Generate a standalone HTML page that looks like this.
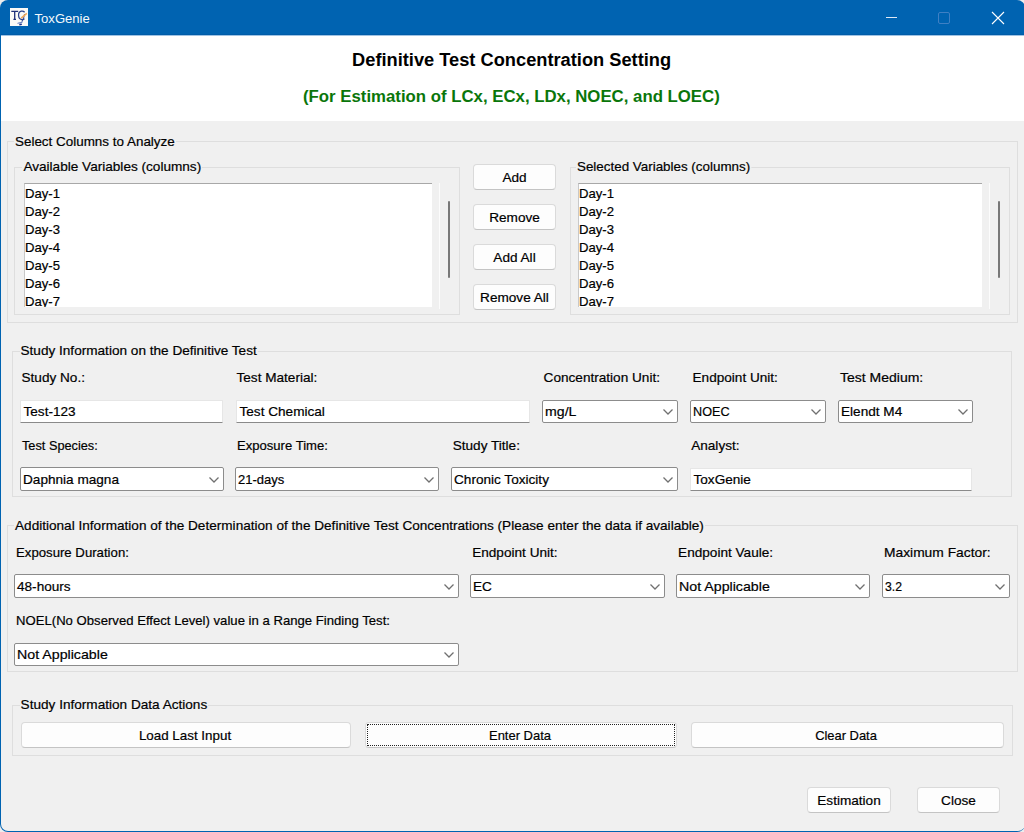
<!DOCTYPE html>
<html><head><meta charset="utf-8"><title>ToxGenie</title>
<style>
html,body{margin:0;padding:0;}
body{width:1024px;height:832px;position:relative;overflow:hidden;background:#ededed;font-family:"Liberation Sans",sans-serif;}
.t{position:absolute;white-space:nowrap;-webkit-text-stroke:0.2px currentColor;}
</style></head><body>

<div style="position:absolute;left:0px;top:0px;width:1025px;height:832px;box-sizing:border-box;background:#0063b1;border-radius:8px;"></div>
<div style="position:absolute;left:1px;top:35px;width:1024px;height:796px;box-sizing:border-box;background:#f0f0f0;border-radius:0 0 7px 7px;"></div>
<div style="position:absolute;left:0px;top:34px;width:1024px;height:1px;box-sizing:border-box;background:#005ca8;"></div>
<div style="position:absolute;left:1px;top:35px;width:1023px;height:1px;box-sizing:border-box;background:#9fc3e4;"></div>
<div style="position:absolute;left:1px;top:36px;width:1023px;height:85px;box-sizing:border-box;background:#fff;"></div>
<svg width="18" height="18" viewBox="0 0 18 18" style="position:absolute;left:10px;top:8px">
<rect x="0" y="0" width="18" height="18" fill="#fbfaf7"/>
<path d="M1.3 3.3 H8.2 M4.7 3.3 V11.4 M3.4 11.4 H6" stroke="#1e2f78" stroke-width="1.3" fill="none"/>
<path d="M14.6 4.2 C13.6 3.1 12.3 2.9 11.2 3.2 C9.2 3.8 8.4 5.8 8.6 7.8 C8.8 10 10.3 11.6 12.3 11.6 C13.2 11.6 13.9 11.3 14.4 10.6" stroke="#2a3f8a" stroke-width="1.3" fill="none"/>
<path d="M14.6 6 C14.2 8.5 13.5 11.5 11.8 13.6" stroke="#3a4f9a" stroke-width="1.1" fill="none"/>
<path d="M11.2 10.2 L16.8 5.4" stroke="#f2a95a" stroke-width="1.6" fill="none"/>
<path d="M7.5 15.3 L12.5 14.2" stroke="#4a6ab8" stroke-width="0.9" fill="none"/>
<path d="M9.3 16.6 L11.8 16.2" stroke="#1a2f8a" stroke-width="1.6" fill="none"/>
</svg>
<div class="t" style="left:34.50px;top:11.06px;font-size:13.1px;line-height:16px;font-weight:normal;color:#f4f8fc;-webkit-text-stroke:0;">ToxGenie</div>
<div style="position:absolute;left:886px;top:17px;width:11px;height:1px;background:#dfe9f5"></div>
<div style="position:absolute;left:938px;top:12px;width:12px;height:12px;box-sizing:border-box;border:1px solid #3f80c4;border-radius:2px"></div>
<svg width="14" height="14" viewBox="0 0 14 14" style="position:absolute;left:991px;top:11px"><path d="M1 1 L13 13 M13 1 L1 13" stroke="#fff" stroke-width="1.1"/></svg>
<div class="t" style="left:211.60px;width:600px;text-align:center;top:48.18px;font-size:18.25px;line-height:23px;font-weight:bold;color:#000;-webkit-text-stroke:0">Definitive Test Concentration Setting</div>
<div class="t" style="left:211.40px;width:600px;text-align:center;top:86.08px;font-size:16.8px;line-height:21px;font-weight:bold;color:#0a760a;-webkit-text-stroke:0">(For Estimation of LCx, ECx, LDx, NOEC, and LOEC)</div>
<div style="position:absolute;left:7px;top:141px;width:1011px;height:182px;box-sizing:border-box;border:1px solid #dedede;"></div>
<div class="t" style="left:13.50px;top:132.59px;font-size:13.6px;line-height:17px;font-weight:normal;color:#000;background:#f0f0f0;padding:0 1px;transform:scaleX(0.988);transform-origin:0 0;">Select Columns to Analyze</div>
<div style="position:absolute;left:14px;top:167px;width:446px;height:148px;box-sizing:border-box;border:1px solid #dedede;"></div>
<div class="t" style="left:22.40px;top:157.79px;font-size:13.6px;line-height:17px;font-weight:normal;color:#000;background:#f0f0f0;padding:0 1px;">Available Variables (columns)</div>
<div style="position:absolute;left:570px;top:167px;width:440px;height:148px;box-sizing:border-box;border:1px solid #dedede;"></div>
<div class="t" style="left:576.40px;top:157.79px;font-size:13.6px;line-height:17px;font-weight:normal;color:#000;background:#f0f0f0;padding:0 1px;transform:scaleX(0.985);transform-origin:0 0;">Selected Variables (columns)</div>
<div style="position:absolute;left:24px;top:183px;width:408px;height:124px;box-sizing:border-box;background:#fff;border-left:1px solid #c8c8c8;border-top:1px solid #a8a8a8;"></div>
<div style="position:absolute;left:25px;top:184px;width:407px;height:123px;overflow:hidden">
<div class="t" style="left:0.3px;top:0.79px;font-size:13.6px;line-height:17px;transform:scaleX(0.965);transform-origin:0 0">Day-1</div>
<div class="t" style="left:0.3px;top:18.79px;font-size:13.6px;line-height:17px;transform:scaleX(0.965);transform-origin:0 0">Day-2</div>
<div class="t" style="left:0.3px;top:36.79px;font-size:13.6px;line-height:17px;transform:scaleX(0.965);transform-origin:0 0">Day-3</div>
<div class="t" style="left:0.3px;top:54.79px;font-size:13.6px;line-height:17px;transform:scaleX(0.965);transform-origin:0 0">Day-4</div>
<div class="t" style="left:0.3px;top:72.79px;font-size:13.6px;line-height:17px;transform:scaleX(0.965);transform-origin:0 0">Day-5</div>
<div class="t" style="left:0.3px;top:90.79px;font-size:13.6px;line-height:17px;transform:scaleX(0.965);transform-origin:0 0">Day-6</div>
<div class="t" style="left:0.3px;top:108.79px;font-size:13.6px;line-height:17px;transform:scaleX(0.965);transform-origin:0 0">Day-7</div>
</div>
<div style="position:absolute;left:439px;top:183px;width:1px;height:126px;box-sizing:border-box;background:#fcfcfc;"></div>
<div style="position:absolute;left:448px;top:201px;width:2px;height:77px;box-sizing:border-box;background:#787878;border-radius:1px;"></div>
<div style="position:absolute;left:578px;top:183px;width:404px;height:124px;box-sizing:border-box;background:#fff;border-left:1px solid #c8c8c8;border-top:1px solid #a8a8a8;"></div>
<div style="position:absolute;left:579px;top:184px;width:403px;height:123px;overflow:hidden">
<div class="t" style="left:0.3px;top:0.79px;font-size:13.6px;line-height:17px;transform:scaleX(0.965);transform-origin:0 0">Day-1</div>
<div class="t" style="left:0.3px;top:18.79px;font-size:13.6px;line-height:17px;transform:scaleX(0.965);transform-origin:0 0">Day-2</div>
<div class="t" style="left:0.3px;top:36.79px;font-size:13.6px;line-height:17px;transform:scaleX(0.965);transform-origin:0 0">Day-3</div>
<div class="t" style="left:0.3px;top:54.79px;font-size:13.6px;line-height:17px;transform:scaleX(0.965);transform-origin:0 0">Day-4</div>
<div class="t" style="left:0.3px;top:72.79px;font-size:13.6px;line-height:17px;transform:scaleX(0.965);transform-origin:0 0">Day-5</div>
<div class="t" style="left:0.3px;top:90.79px;font-size:13.6px;line-height:17px;transform:scaleX(0.965);transform-origin:0 0">Day-6</div>
<div class="t" style="left:0.3px;top:108.79px;font-size:13.6px;line-height:17px;transform:scaleX(0.965);transform-origin:0 0">Day-7</div>
</div>
<div style="position:absolute;left:989px;top:183px;width:1px;height:126px;box-sizing:border-box;background:#fcfcfc;"></div>
<div style="position:absolute;left:998px;top:201px;width:2px;height:77px;box-sizing:border-box;background:#787878;border-radius:1px;"></div>
<div style="position:absolute;left:473px;top:164px;width:83px;height:26px;box-sizing:border-box;background:#fdfdfd;border:1px solid #dadada;border-bottom-color:#c4c4c4;border-radius:4px;"></div>
<div class="t" style="left:214.50px;width:600px;text-align:center;top:168.99px;font-size:13.6px;line-height:17px;font-weight:normal;color:#000;">Add</div>
<div style="position:absolute;left:473px;top:204px;width:83px;height:26px;box-sizing:border-box;background:#fdfdfd;border:1px solid #dadada;border-bottom-color:#c4c4c4;border-radius:4px;"></div>
<div class="t" style="left:214.50px;width:600px;text-align:center;top:208.99px;font-size:13.6px;line-height:17px;font-weight:normal;color:#000;">Remove</div>
<div style="position:absolute;left:473px;top:244px;width:83px;height:26px;box-sizing:border-box;background:#fdfdfd;border:1px solid #dadada;border-bottom-color:#c4c4c4;border-radius:4px;"></div>
<div class="t" style="left:214.50px;width:600px;text-align:center;top:248.99px;font-size:13.6px;line-height:17px;font-weight:normal;color:#000;">Add All</div>
<div style="position:absolute;left:473px;top:284px;width:83px;height:26px;box-sizing:border-box;background:#fdfdfd;border:1px solid #dadada;border-bottom-color:#c4c4c4;border-radius:4px;"></div>
<div class="t" style="left:214.50px;width:600px;text-align:center;top:288.99px;font-size:13.6px;line-height:17px;font-weight:normal;color:#000;">Remove All</div>
<div style="position:absolute;left:12px;top:351px;width:1000px;height:146px;box-sizing:border-box;border:1px solid #dedede;"></div>
<div class="t" style="left:19.50px;top:341.79px;font-size:13.6px;line-height:17px;font-weight:normal;color:#000;background:#f0f0f0;padding:0 1px;">Study Information on the Definitive Test</div>
<div class="t" style="left:21.50px;top:368.79px;font-size:13.6px;line-height:17px;font-weight:normal;color:#000;">Study No.:</div>
<div class="t" style="left:236.50px;top:368.79px;font-size:13.6px;line-height:17px;font-weight:normal;color:#000;">Test Material:</div>
<div class="t" style="left:543.60px;top:368.79px;font-size:13.6px;line-height:17px;font-weight:normal;color:#000;">Concentration Unit:</div>
<div class="t" style="left:692.50px;top:368.79px;font-size:13.6px;line-height:17px;font-weight:normal;color:#000;">Endpoint Unit:</div>
<div class="t" style="left:840.00px;top:368.79px;font-size:13.6px;line-height:17px;font-weight:normal;color:#000;transform:scaleX(1.03);transform-origin:0 0;">Test Medium:</div>
<div style="position:absolute;left:20px;top:400px;width:203px;height:23px;box-sizing:border-box;background:#fff;border:1px solid #e6e6e6;border-bottom:1px solid #8a8a8a;border-radius:1px;"></div>
<div class="t" style="left:23.50px;top:403.29px;font-size:13.6px;line-height:17px;font-weight:normal;color:#000;">Test-123</div>
<div style="position:absolute;left:236px;top:400px;width:294px;height:23px;box-sizing:border-box;background:#fff;border:1px solid #e6e6e6;border-bottom:1px solid #8a8a8a;border-radius:1px;"></div>
<div class="t" style="left:239.50px;top:403.29px;font-size:13.6px;line-height:17px;font-weight:normal;color:#000;">Test Chemical</div>
<div style="position:absolute;left:542px;top:400px;width:136px;height:23px;box-sizing:border-box;background:#fff;border:1px solid #8c8c8c;border-radius:2px;"></div>
<div class="t" style="left:545.00px;top:402.79px;font-size:13.6px;line-height:17px;font-weight:normal;color:#000;transform:scaleX(1.04);transform-origin:0 0;">mg/L</div>
<svg width="10" height="6" viewBox="0 0 10 6" style="position:absolute;left:663px;top:409.0px"><path d="M0.5 0.5 L5 5 L9.5 0.5" fill="none" stroke="#707070" stroke-width="1.25"/></svg>
<div style="position:absolute;left:690px;top:400px;width:136px;height:23px;box-sizing:border-box;background:#fff;border:1px solid #8c8c8c;border-radius:2px;"></div>
<div class="t" style="left:693.00px;top:402.79px;font-size:13.6px;line-height:17px;font-weight:normal;color:#000;transform:scaleX(0.93);transform-origin:0 0;">NOEC</div>
<svg width="10" height="6" viewBox="0 0 10 6" style="position:absolute;left:811px;top:409.0px"><path d="M0.5 0.5 L5 5 L9.5 0.5" fill="none" stroke="#707070" stroke-width="1.25"/></svg>
<div style="position:absolute;left:838px;top:400px;width:135px;height:23px;box-sizing:border-box;background:#fff;border:1px solid #8c8c8c;border-radius:2px;"></div>
<div class="t" style="left:841.00px;top:402.79px;font-size:13.6px;line-height:17px;font-weight:normal;color:#000;">Elendt M4</div>
<svg width="10" height="6" viewBox="0 0 10 6" style="position:absolute;left:958px;top:409.0px"><path d="M0.5 0.5 L5 5 L9.5 0.5" fill="none" stroke="#707070" stroke-width="1.25"/></svg>
<div class="t" style="left:22.10px;top:437.09px;font-size:13.6px;line-height:17px;font-weight:normal;color:#000;transform:scaleX(0.937);transform-origin:0 0;">Test Species:</div>
<div class="t" style="left:237.10px;top:437.09px;font-size:13.6px;line-height:17px;font-weight:normal;color:#000;transform:scaleX(0.962);transform-origin:0 0;">Exposure Time:</div>
<div class="t" style="left:452.70px;top:437.09px;font-size:13.6px;line-height:17px;font-weight:normal;color:#000;">Study Title:</div>
<div class="t" style="left:691.20px;top:437.09px;font-size:13.6px;line-height:17px;font-weight:normal;color:#000;">Analyst:</div>
<div style="position:absolute;left:20px;top:467px;width:204px;height:24px;box-sizing:border-box;background:#fff;border:1px solid #8c8c8c;border-radius:2px;"></div>
<div class="t" style="left:23.00px;top:470.79px;font-size:13.6px;line-height:17px;font-weight:normal;color:#000;">Daphnia magna</div>
<svg width="10" height="6" viewBox="0 0 10 6" style="position:absolute;left:209px;top:476.5px"><path d="M0.5 0.5 L5 5 L9.5 0.5" fill="none" stroke="#707070" stroke-width="1.25"/></svg>
<div style="position:absolute;left:235px;top:467px;width:204px;height:24px;box-sizing:border-box;background:#fff;border:1px solid #8c8c8c;border-radius:2px;"></div>
<div class="t" style="left:238.00px;top:470.79px;font-size:13.6px;line-height:17px;font-weight:normal;color:#000;transform:scaleX(0.956);transform-origin:0 0;">21-days</div>
<svg width="10" height="6" viewBox="0 0 10 6" style="position:absolute;left:424px;top:476.5px"><path d="M0.5 0.5 L5 5 L9.5 0.5" fill="none" stroke="#707070" stroke-width="1.25"/></svg>
<div style="position:absolute;left:451px;top:467px;width:227px;height:24px;box-sizing:border-box;background:#fff;border:1px solid #8c8c8c;border-radius:2px;"></div>
<div class="t" style="left:454.00px;top:470.79px;font-size:13.6px;line-height:17px;font-weight:normal;color:#000;">Chronic Toxicity</div>
<svg width="10" height="6" viewBox="0 0 10 6" style="position:absolute;left:663px;top:476.5px"><path d="M0.5 0.5 L5 5 L9.5 0.5" fill="none" stroke="#707070" stroke-width="1.25"/></svg>
<div style="position:absolute;left:690px;top:468px;width:282px;height:23px;box-sizing:border-box;background:#fff;border:1px solid #e6e6e6;border-bottom:1px solid #8a8a8a;border-radius:1px;"></div>
<div class="t" style="left:693.50px;top:471.29px;font-size:13.6px;line-height:17px;font-weight:normal;color:#000;">ToxGenie</div>
<div style="position:absolute;left:7px;top:525px;width:1011px;height:147px;box-sizing:border-box;border:1px solid #dedede;"></div>
<div class="t" style="left:14.00px;top:516.79px;font-size:13.6px;line-height:17px;font-weight:normal;color:#000;background:#f0f0f0;padding:0 1px;">Additional Information of the Determination of the Definitive Test Concentrations (Please enter the data if available)</div>
<div class="t" style="left:16.00px;top:543.79px;font-size:13.6px;line-height:17px;font-weight:normal;color:#000;transform:scaleX(0.97);transform-origin:0 0;">Exposure Duration:</div>
<div class="t" style="left:472.20px;top:543.79px;font-size:13.6px;line-height:17px;font-weight:normal;color:#000;">Endpoint Unit:</div>
<div class="t" style="left:678.10px;top:543.79px;font-size:13.6px;line-height:17px;font-weight:normal;color:#000;">Endpoint Vaule:</div>
<div class="t" style="left:883.60px;top:543.79px;font-size:13.6px;line-height:17px;font-weight:normal;color:#000;transform:scaleX(1.015);transform-origin:0 0;">Maximum Factor:</div>
<div style="position:absolute;left:14px;top:574px;width:445px;height:24px;box-sizing:border-box;background:#fff;border:1px solid #8c8c8c;border-radius:2px;"></div>
<div class="t" style="left:17.00px;top:577.79px;font-size:13.6px;line-height:17px;font-weight:normal;color:#000;">48-hours</div>
<svg width="10" height="6" viewBox="0 0 10 6" style="position:absolute;left:444px;top:583.5px"><path d="M0.5 0.5 L5 5 L9.5 0.5" fill="none" stroke="#707070" stroke-width="1.25"/></svg>
<div style="position:absolute;left:470px;top:574px;width:195px;height:24px;box-sizing:border-box;background:#fff;border:1px solid #8c8c8c;border-radius:2px;"></div>
<div class="t" style="left:473.00px;top:577.79px;font-size:13.6px;line-height:17px;font-weight:normal;color:#000;">EC</div>
<svg width="10" height="6" viewBox="0 0 10 6" style="position:absolute;left:650px;top:583.5px"><path d="M0.5 0.5 L5 5 L9.5 0.5" fill="none" stroke="#707070" stroke-width="1.25"/></svg>
<div style="position:absolute;left:676px;top:574px;width:194px;height:24px;box-sizing:border-box;background:#fff;border:1px solid #8c8c8c;border-radius:2px;"></div>
<div class="t" style="left:679.00px;top:577.79px;font-size:13.6px;line-height:17px;font-weight:normal;color:#000;transform:scaleX(1.045);transform-origin:0 0;">Not Applicable</div>
<svg width="10" height="6" viewBox="0 0 10 6" style="position:absolute;left:855px;top:583.5px"><path d="M0.5 0.5 L5 5 L9.5 0.5" fill="none" stroke="#707070" stroke-width="1.25"/></svg>
<div style="position:absolute;left:882px;top:574px;width:128px;height:24px;box-sizing:border-box;background:#fff;border:1px solid #8c8c8c;border-radius:2px;"></div>
<div class="t" style="left:885.00px;top:577.79px;font-size:13.6px;line-height:17px;font-weight:normal;color:#000;transform:scaleX(0.9);transform-origin:0 0;">3.2</div>
<svg width="10" height="6" viewBox="0 0 10 6" style="position:absolute;left:995px;top:583.5px"><path d="M0.5 0.5 L5 5 L9.5 0.5" fill="none" stroke="#707070" stroke-width="1.25"/></svg>
<div class="t" style="left:15.60px;top:612.39px;font-size:13.6px;line-height:17px;font-weight:normal;color:#000;transform:scaleX(0.966);transform-origin:0 0;">NOEL(No Observed Effect Level) value in a Range Finding Test:</div>
<div style="position:absolute;left:14px;top:643px;width:445px;height:23px;box-sizing:border-box;background:#fff;border:1px solid #8c8c8c;border-radius:2px;"></div>
<div class="t" style="left:17.00px;top:645.79px;font-size:13.6px;line-height:17px;font-weight:normal;color:#000;transform:scaleX(1.045);transform-origin:0 0;">Not Applicable</div>
<svg width="10" height="6" viewBox="0 0 10 6" style="position:absolute;left:444px;top:652.0px"><path d="M0.5 0.5 L5 5 L9.5 0.5" fill="none" stroke="#707070" stroke-width="1.25"/></svg>
<div style="position:absolute;left:12px;top:705px;width:1001px;height:51px;box-sizing:border-box;border:1px solid #dedede;"></div>
<div class="t" style="left:19.60px;top:696.19px;font-size:13.6px;line-height:17px;font-weight:normal;color:#000;background:#f0f0f0;padding:0 1px;">Study Information Data Actions</div>
<div style="position:absolute;left:21px;top:722px;width:330px;height:26px;box-sizing:border-box;background:#fdfdfd;border:1px solid #dadada;border-bottom-color:#c4c4c4;border-radius:4px;"></div>
<div class="t" style="left:-115.00px;width:600px;text-align:center;top:726.99px;font-size:13.6px;line-height:17px;font-weight:normal;color:#000;transform:scaleX(0.984);transform-origin:50% 0;">Load Last Input</div>
<div style="position:absolute;left:365px;top:722px;width:312px;height:26px;box-sizing:border-box;background:#fdfdfd;border:1px solid #dadada;border-bottom-color:#c4c4c4;border-radius:4px;"></div>
<div style="position:absolute;left:367px;top:724px;width:308px;height:22px;box-sizing:border-box;border:1px dotted #222;"></div>
<div class="t" style="left:219.60px;width:600px;text-align:center;top:726.99px;font-size:13.6px;line-height:17px;font-weight:normal;color:#000;transform:scaleX(0.953);transform-origin:50% 0;">Enter Data</div>
<div style="position:absolute;left:691px;top:722px;width:313px;height:26px;box-sizing:border-box;background:#fdfdfd;border:1px solid #dadada;border-bottom-color:#c4c4c4;border-radius:4px;"></div>
<div class="t" style="left:546.00px;width:600px;text-align:center;top:726.99px;font-size:13.6px;line-height:17px;font-weight:normal;color:#000;transform:scaleX(0.95);transform-origin:50% 0;">Clear Data</div>
<div style="position:absolute;left:807px;top:787px;width:84px;height:26px;box-sizing:border-box;background:#fdfdfd;border:1px solid #dadada;border-bottom-color:#c4c4c4;border-radius:4px;"></div>
<div class="t" style="left:549.00px;width:600px;text-align:center;top:791.99px;font-size:13.6px;line-height:17px;font-weight:normal;color:#000;">Estimation</div>
<div style="position:absolute;left:917px;top:787px;width:83px;height:26px;box-sizing:border-box;background:#fdfdfd;border:1px solid #dadada;border-bottom-color:#c4c4c4;border-radius:4px;"></div>
<div class="t" style="left:658.50px;width:600px;text-align:center;top:791.99px;font-size:13.6px;line-height:17px;font-weight:normal;color:#000;">Close</div>
</body></html>
